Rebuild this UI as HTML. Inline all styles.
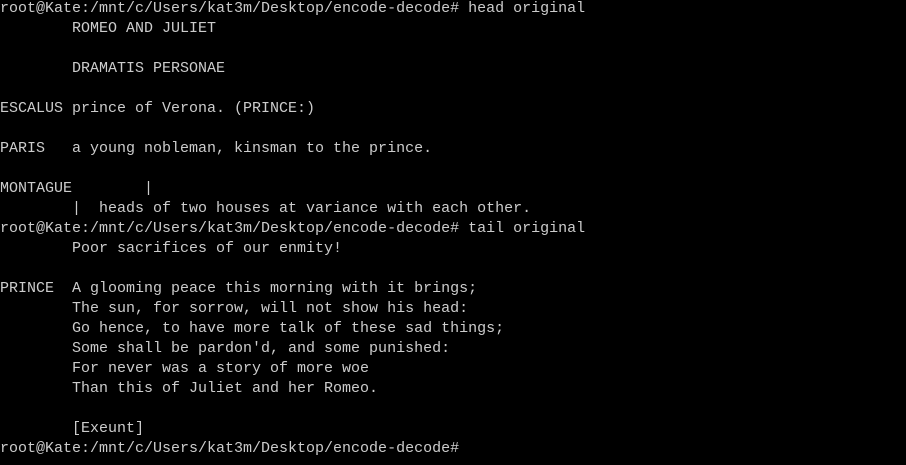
<!DOCTYPE html>
<html><head><meta charset="utf-8"><style>
html,body{margin:0;padding:0;background:#000;width:906px;height:465px;overflow:hidden}
pre{margin:0;position:absolute;left:0;top:-1px;font-family:"Liberation Mono","DejaVu Sans Mono",monospace;font-size:15px;line-height:20px;color:#cccccc;tab-size:8;-moz-tab-size:8;white-space:pre}
</style></head><body><pre>root@Kate:/mnt/c/Users/kat3m/Desktop/encode-decode# head original
        ROMEO AND JULIET

        DRAMATIS PERSONAE

ESCALUS prince of Verona. (PRINCE:)

PARIS   a young nobleman, kinsman to the prince.

MONTAGUE        |
        |  heads of two houses at variance with each other.
root@Kate:/mnt/c/Users/kat3m/Desktop/encode-decode# tail original
        Poor sacrifices of our enmity!

PRINCE  A glooming peace this morning with it brings;
        The sun, for sorrow, will not show his head:
        Go hence, to have more talk of these sad things;
        Some shall be pardon'd, and some punished:
        For never was a story of more woe
        Than this of Juliet and her Romeo.

        [Exeunt]
root@Kate:/mnt/c/Users/kat3m/Desktop/encode-decode#</pre></body></html>
